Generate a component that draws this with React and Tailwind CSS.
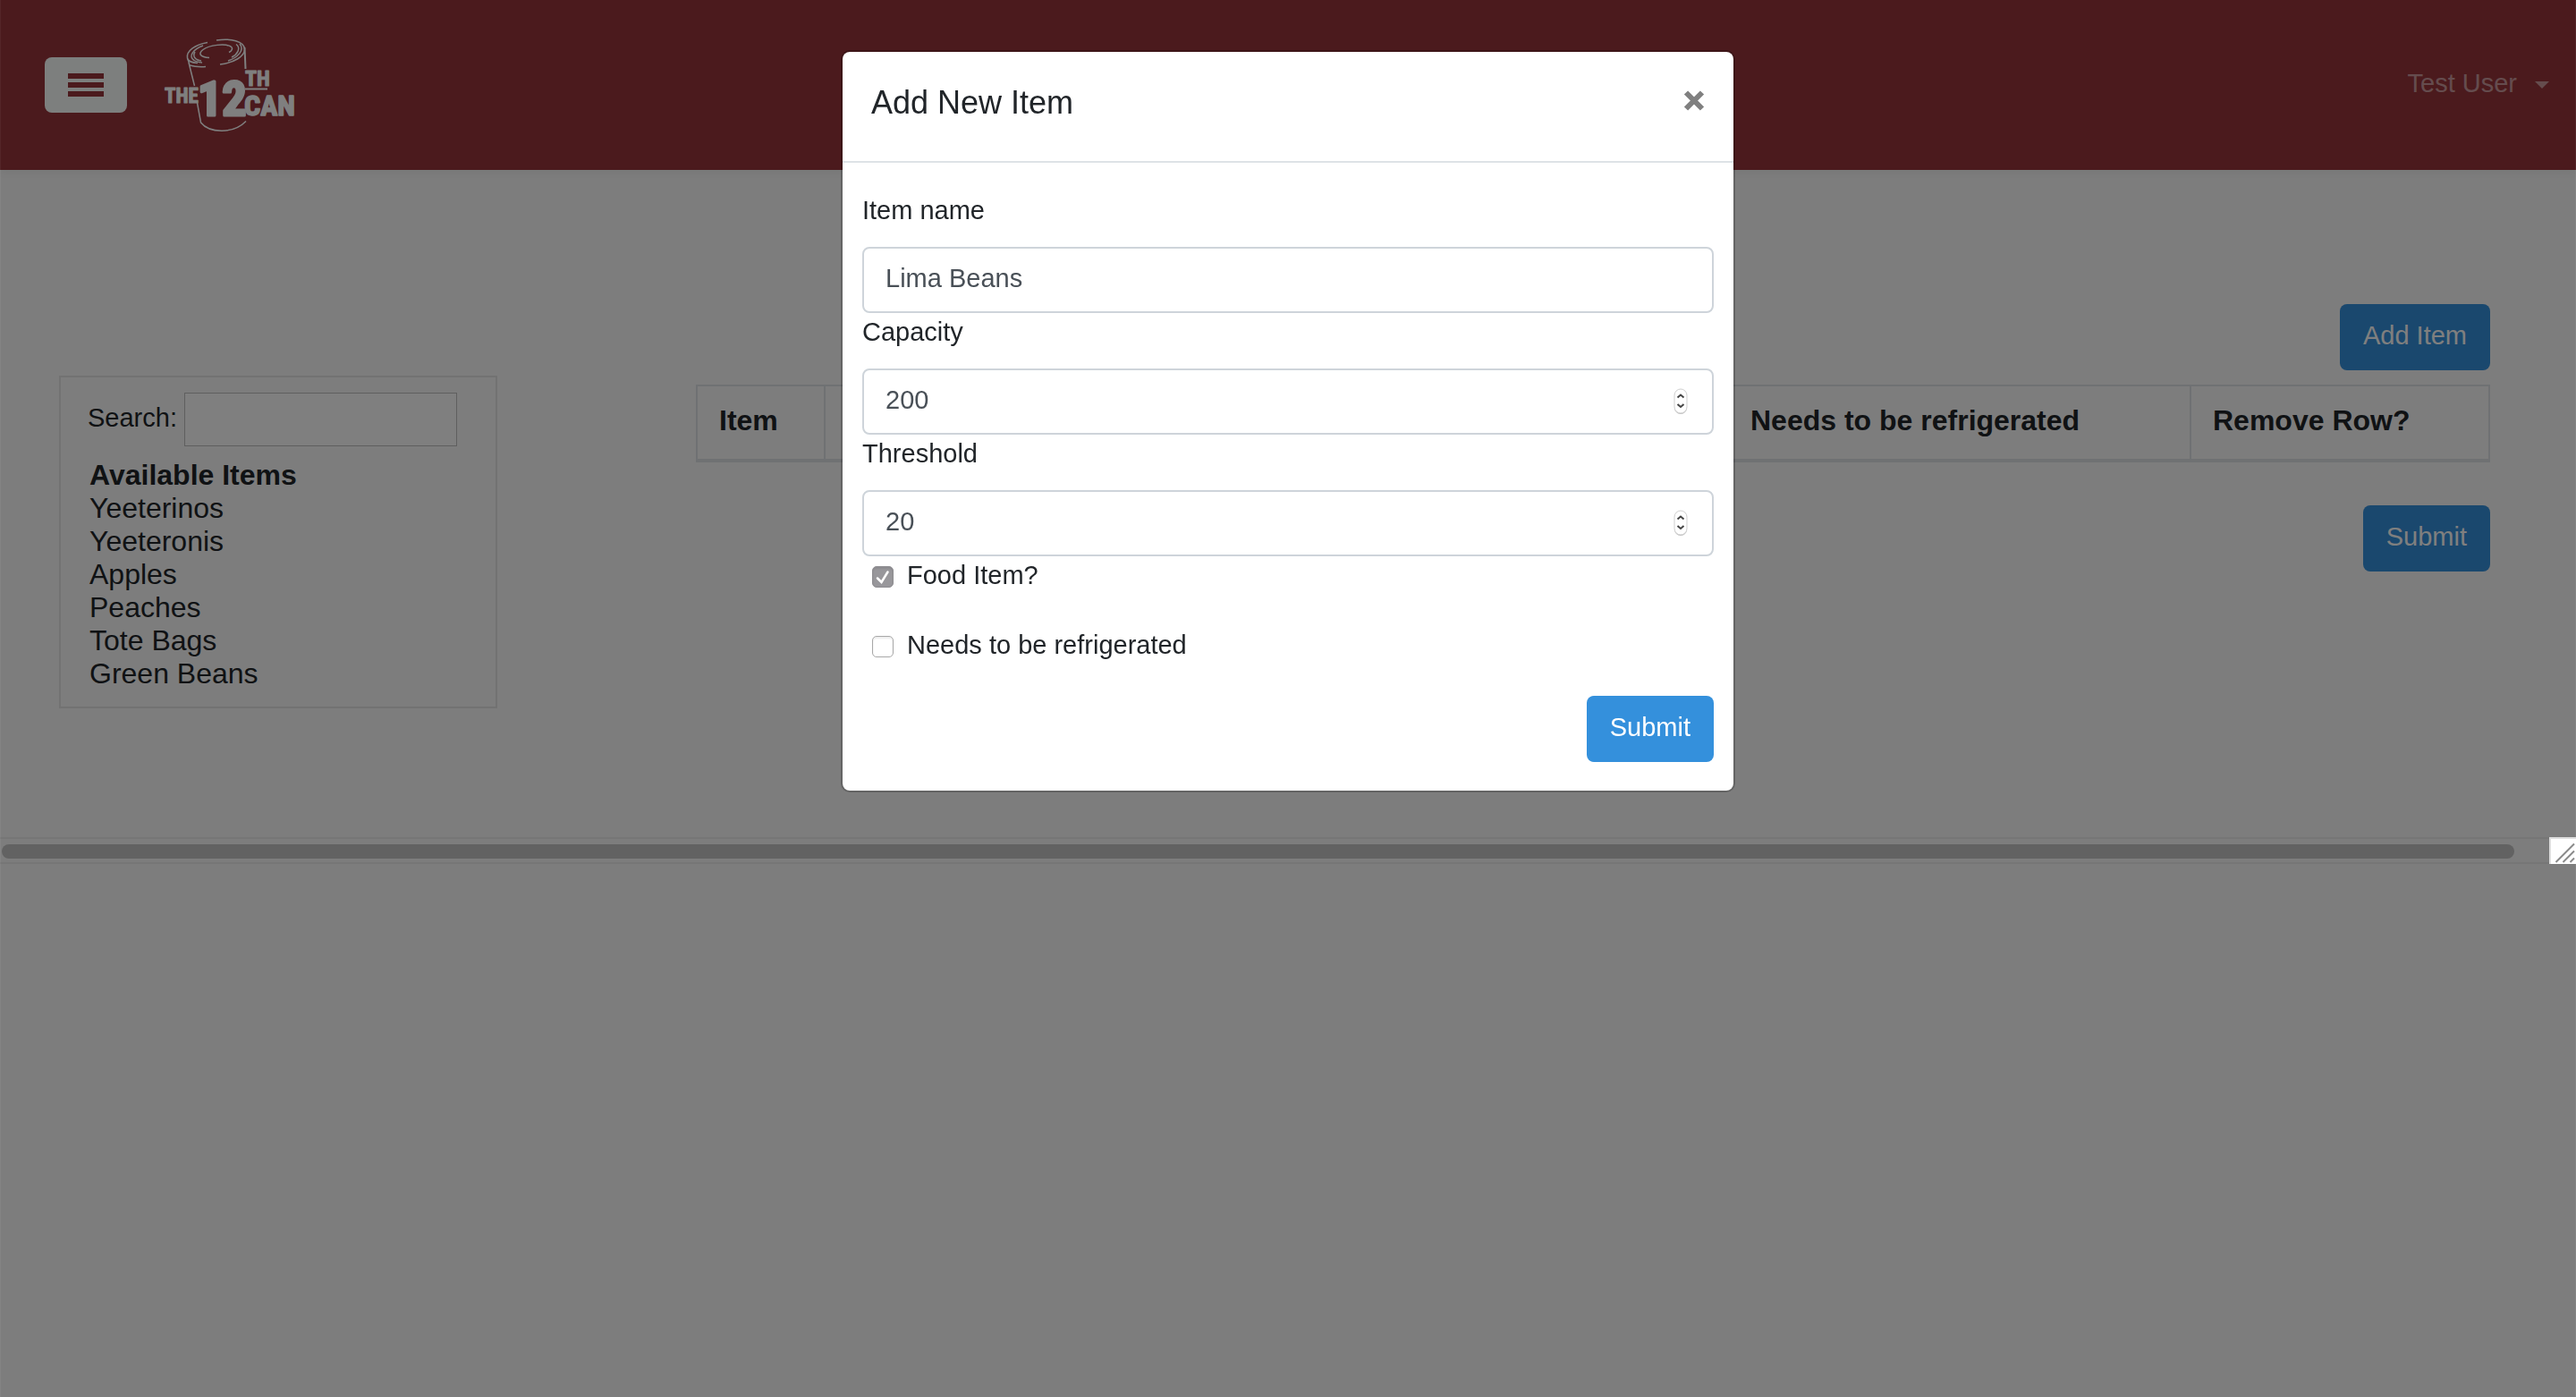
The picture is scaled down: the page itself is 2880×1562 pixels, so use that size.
import React from "react";

const availableItems = ["Yeeterinos", "Yeeteronis", "Apples", "Peaches", "Tote Bags", "Green Beans"];

function Logo() {
  return (
    <svg viewBox="0 0 180 130" className="h-[130px] w-[180px]" fill="none" stroke="#fff" strokeWidth="1.5" role="img" aria-label="The 12th Can">
      <path d="M62 17.5C48 20 38 27 39.500 35C40 38 44 40 51 40.500" />
      <path d="M72 15C88 12.500 103 16 103.500 25C103.500 33 92 40 76 42" />
      <path d="M98 19C104 26 96 34 85 38M94 19.500C100 24 95 31 89 34" />
      <path d="M57 21C46 25 40 33 47 37.500C49 39 52 39.500 56 40" />
      <path d="M48 28C45 33 48 37 55 38" />
      <path d="M64 34.500C54 34 51 30 57 25.500C64 20 82 18.500 88 22C91 24 89 27 86 28.500" />
      <path d="M40 36L42 43C47 44.500 53 45 60 44.500M41 40L47.500 66M50.500 85L54.500 107C64 119 91 120 105 105.500" />
      <path d="M103.500 23L104.500 47" strokeWidth="2" />
      <path d="M104 69.500H129" strokeWidth="2" />
      <g
        fill="#fff"
        stroke="#fff"
        strokeWidth="1"
        strokeLinejoin="round"
        fontWeight="700"
        fontFamily="'Liberation Sans Narrow','Roboto Condensed','Open Sans Condensed','Liberation Sans',sans-serif"
      >
        <text x="14" y="84.500" fontSize="23">THE</text>
        <text x="51" y="99" fontSize="54" strokeWidth="3">12</text>
        <text x="104" y="65.500" fontSize="24">TH</text>
        <text x="103" y="99" fontSize="32" strokeWidth="1.500">CAN</text>
      </g>
    </svg>
  );
}

function PrimaryButton({ children, type = "button" }) {
  return (
    <button type={type} className="rounded-lg bg-[#3490dc] px-[26px] pt-2.5 pb-3.5 text-[29px] leading-[50px] text-white">
      {children}
    </button>
  );
}

function Header() {
  return (
    <header className="flex h-[190px] items-center bg-[#96343a] pr-[30px] pl-[50px] shadow-[0_4px_8px_rgba(0,0,0,0.04)]">
      <button type="button" aria-label="Open menu" className="flex h-[62px] w-[92px] flex-col items-center justify-center gap-1 rounded-lg bg-[#fbfffd]">
        <span className="h-1.5 w-10 bg-[#96343a]" />
        <span className="h-1.5 w-10 bg-[#96343a]" />
        <span className="h-1.5 w-10 bg-[#96343a]" />
      </button>
      <a href="#home" className="ml-7">
        <Logo />
      </a>
      <button type="button" className="ml-auto flex items-center gap-5 text-[29px] leading-[46px] text-white/50">
        <span className="pb-1">Test User</span>
        <svg viewBox="0 0 16 8" className="h-2 w-4" fill="currentColor" aria-hidden="true">
          <path d="M0 0H16L8 8Z" />
        </svg>
      </button>
    </header>
  );
}

function Sidebar() {
  return (
    <aside className="mt-20 w-[490px] shrink-0 self-start border-2 border-[#e4e5e5] px-[30px] pt-[17px] pb-[18px]">
      <div className="flex items-center gap-2">
        <label htmlFor="search" className="pb-1 text-[29px] leading-[46px]">Search:</label>
        <input id="search" type="text" className="h-[60px] w-[305px] shrink-0 border border-[#bebebe] bg-white px-2 text-[29px]" />
      </div>
      <div className="mt-3.5 pl-0.5 text-[32px] leading-[37px]">
        <h2 className="font-bold">Available Items</h2>
        <ul>
          {availableItems.map((item) => (
            <li key={item}>{item}</li>
          ))}
        </ul>
      </div>
    </aside>
  );
}

function ItemTable() {
  const cell = "border-2 border-b-4 border-[#dee2e6] px-6 pt-5 pb-6 text-left font-bold";
  return (
    <table className="mt-4 w-full table-fixed border-collapse text-[32px] leading-[37px]">
      <colgroup>
        <col className="w-[143px]" />
        <col />
        <col className="w-[517px]" />
        <col className="w-[334px]" />
      </colgroup>
      <thead>
        <tr>
          <th className={cell}>Item</th>
          <td className={cell} />
          <th className={cell}>Needs to be refrigerated</th>
          <th className={cell}>Remove Row?</th>
        </tr>
      </thead>
    </table>
  );
}

function ScrollStrip() {
  return (
    <div className="flex h-[30px]">
      <div className="flex flex-1 items-center border-y-2 border-[#ededed] pt-0.5 pr-[39px] pl-0.5">
        <div className="h-4 flex-1 rounded-full bg-[#c4c4c4]" />
      </div>
      <div className="relative z-50 h-[30px] w-[30px] border-t-2 border-l-2 border-[#dedede] bg-white">
        <svg viewBox="0 0 28 28" className="h-7 w-7" fill="none" stroke="#8a8a8a" strokeWidth="2" aria-hidden="true">
          <path d="M5.500 26L26 5.500M13.500 26L26 13.500M21.500 26L26 21.500" />
        </svg>
      </div>
    </div>
  );
}

function Field({ id, label, type = "text", value }) {
  return (
    <div>
      <label htmlFor={id} className="block text-[29px] leading-[42px]">{label}</label>
      <div className="relative mt-5">
        <input
          id={id}
          type={type}
          defaultValue={value}
          className="block h-[74px] w-full appearance-none rounded-lg border-2 border-[#ced4da] bg-white px-6 pt-2 pb-3 text-[29px] text-[#495057] [&::-webkit-inner-spin-button]:appearance-none"
        />
        {type === "number" && (
          <svg viewBox="0 0 16 30" className="pointer-events-none absolute top-[22px] right-[29px] h-[30px] w-4" fill="none" aria-hidden="true">
            <rect x="1" y="2" width="14" height="27" rx="7" fill="#bdbdbd" />
            <rect x="1" y="1" width="14" height="27" rx="7" fill="#fff" stroke="#cfcfcf" />
            <path d="M4.500 10.500L8 7.500L11.500 10.500M4.500 18L8 21L11.500 18" stroke="#444" strokeWidth="2" />
          </svg>
        )}
      </div>
    </div>
  );
}

function CheckField({ id, label, checked = false }) {
  return (
    <div className="ml-[11px] flex items-center gap-[15px]">
      <span className="mt-1 grid h-6 w-6">
        <input
          id={id}
          type="checkbox"
          defaultChecked={checked}
          className="peer col-start-1 row-start-1 h-6 w-6 appearance-none rounded-[5px] border border-[#a8a8a8] bg-white shadow-[inset_0_2px_2px_rgba(0,0,0,0.08)] checked:border-[#8e8d91] checked:bg-[#98979b]"
        />
        <svg viewBox="0 0 24 24" className="pointer-events-none col-start-1 row-start-1 hidden h-6 w-6 peer-checked:block" fill="none" stroke="#fff" strokeWidth="2.500" strokeLinecap="round" aria-hidden="true">
          <path d="M6 13.500L10.500 18L17.500 6.500" />
        </svg>
      </span>
      <label htmlFor={id} className="text-[29px] leading-[42px]">{label}</label>
    </div>
  );
}

function AddItemModal() {
  return (
    <div className="fixed inset-0 z-40 flex items-start justify-center border-x border-white/5 bg-black/50 pt-14">
      <div role="dialog" aria-modal="true" aria-labelledby="modal-title" className="w-full max-w-[1000px] rounded-[10px] border-2 border-black/20 bg-white bg-clip-padding">
        <div className="flex justify-between border-b-2 border-[#dee2e6] px-8 pt-[30px] pb-[38px]">
          <h1 id="modal-title" className="text-4xl leading-[54px]">Add New Item</h1>
          <button type="button" aria-label="Close" className="mt-3 h-6 w-6">
            <svg viewBox="0 0 24 24" className="h-6 w-6" stroke="#808080" strokeWidth="6" aria-hidden="true">
              <path d="M3 3.500L21 21.500M21 3.500L3 21.500" />
            </svg>
          </button>
        </div>
        <form className="px-[22px] py-8" onSubmit={(e) => e.preventDefault()}>
          <Field id="item-name" label="Item name" value="Lima Beans" />
          <Field id="capacity" label="Capacity" type="number" value="200" />
          <Field id="threshold" label="Threshold" type="number" value="20" />
          <div className="flex flex-col gap-9">
            <CheckField id="food-item" label="Food Item?" checked />
            <CheckField id="refrigerated" label="Needs to be refrigerated" />
            <div className="flex justify-end">
              <PrimaryButton type="submit">Submit</PrimaryButton>
            </div>
          </div>
        </form>
      </div>
    </div>
  );
}

export default function App() {
  return (
    <div className="min-h-screen bg-[#fafafa] font-['Liberation_Sans',Arial,sans-serif] text-[#212529]">
      <Header />
      <main className="flex gap-[222px] pt-[150px] pr-24 pb-36 pl-[66px]">
        <Sidebar />
        <section className="flex flex-1 flex-col items-end">
          <PrimaryButton>Add Item</PrimaryButton>
          <ItemTable />
          <div className="mt-12">
            <PrimaryButton type="submit">Submit</PrimaryButton>
          </div>
        </section>
      </main>
      <ScrollStrip />
      <AddItemModal />
    </div>
  );
}
